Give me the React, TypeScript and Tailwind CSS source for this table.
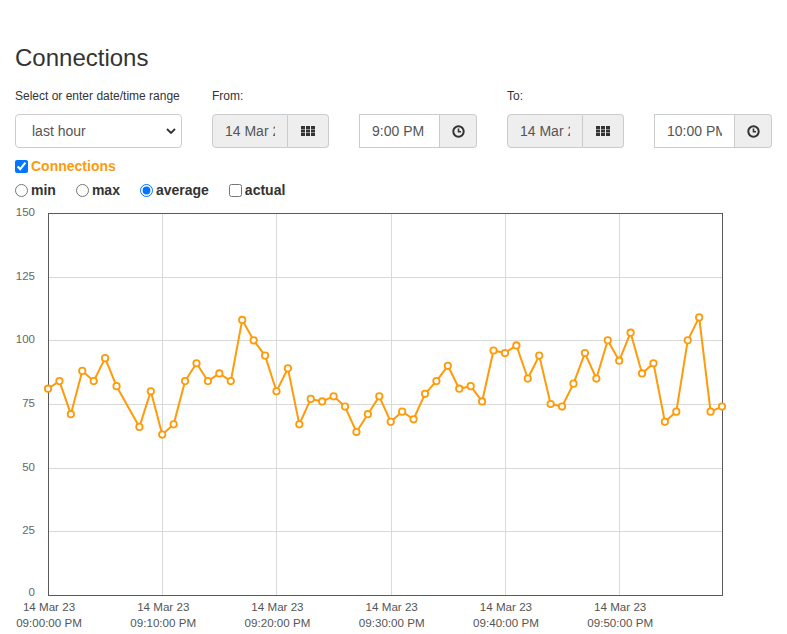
const values: (number | null)[] = [
  81, 84, 71, 88, 84, 93, 82, null, 66, 80, 63, 67, 84, 91, 84, 87, 84, 108, 100, 94,
  80, 89, 67, 77, 76, 78, 74, 64, 71, 78, 68, 72, 69, 79, 84, 90, 81, 82, 76, 96,
  95, 98, 85, 94, 75, 74, 83, 95, 85, 100, 92, 103, 87, 91, 68, 72, 100, 109, 72, 74,
];

const X0 = 48;
const X1 = 722;
const Y0 = 595;
const Y1 = 213;
const xOf = (m: number) => X0 + (m * (X1 - X0)) / 59;
const yOf = (v: number) => Y0 - (v * (Y0 - Y1)) / 150;

const GridIcon = () => (
  <svg width="14" height="10" viewBox="0 0 14 10" fill="#333">
    {[0, 5, 10].map((x) =>
      [0, 3.5, 7].map((y) => <rect key={`${x}-${y}`} x={x} y={y} width="4" height="3" />)
    )}
  </svg>
);

const ClockIcon = () => (
  <svg width="13" height="13" viewBox="0 0 13 13" fill="none" stroke="#333">
    <circle cx="6.5" cy="6.5" r="5.2" strokeWidth="2" />
    <path d="M6.5 3.4 V6.8 H9" strokeWidth="1.6" />
  </svg>
);

const DateGroup = ({ value }: { value: string }) => (
  <div className="flex h-[34px]">
    <input
      readOnly
      value={value}
      className="w-[76px] h-full rounded-l-[4px] border border-[#ccc] bg-[#eee] px-[12px] text-[14px] text-[#555] outline-none"
    />
    <div className="flex w-[41px] h-full items-center justify-center rounded-r-[4px] border border-l-0 border-[#ccc] bg-[#eee]">
      <GridIcon />
    </div>
  </div>
);

const TimeGroup = ({ value }: { value: string }) => (
  <div className="flex h-[34px]">
    <input
      readOnly
      value={value}
      className="w-[81px] h-full border border-[#ccc] bg-white px-[12px] text-[14px] text-[#555] outline-none"
    />
    <div className="flex w-[37px] h-full items-center justify-center rounded-r-[4px] border border-l-0 border-[#ccc] bg-[#eee]">
      <ClockIcon />
    </div>
  </div>
);

const Chart = () => {
  const pts = values
    .map((v, m) => (v === null ? null : [xOf(m), yOf(v)]))
    .filter((p): p is number[] => p !== null);
  const yTicks = [0, 25, 50, 75, 100, 125, 150];
  const xTicks = [0, 10, 20, 30, 40, 50];

  return (
    <svg className="block" width="787" height="434" viewBox="0 200 787 434">
      {yTicks.slice(1, -1).map((t) => (
        <line key={t} x1={X0} x2={X1} y1={Math.round(yOf(t)) + 0.5} y2={Math.round(yOf(t)) + 0.5} stroke="#d9d9d9" />
      ))}
      {xTicks.slice(1).map((t) => (
        <line key={t} x1={Math.round(xOf(t)) + 0.5} x2={Math.round(xOf(t)) + 0.5} y1={Y1} y2={Y0} stroke="#d9d9d9" />
      ))}
      <rect x={X0 + 0.5} y={Y1 + 0.5} width={X1 - X0} height={Y0 - Y1} fill="none" stroke="#5a5a5a" />

      {yTicks.map((t) => (
        <text key={t} x="35" y={yOf(t) - (t === 0 ? 2 : 0)} textAnchor="end" dominantBaseline="middle" fontSize="11.5" fill="#666">
          {t}
        </text>
      ))}
      {xTicks.map((t) => {
        const min = t.toString().padStart(2, "0");
        return (
          <g key={t} fontSize="11.6" fill="#555" textAnchor="middle">
            <text x={xOf(t) + 1} y="611">14 Mar 23</text>
            <text x={xOf(t) + 1} y="627">{`09:${min}:00 PM`}</text>
          </g>
        );
      })}

      <polyline points={pts.map((p) => p.join(",")).join(" ")} fill="none" stroke="#ff9a0a" strokeWidth="2" strokeLinejoin="round" />
      {pts.map(([x, y], i) => (
        <circle key={i} cx={x} cy={y} r="3.2" fill="white" stroke="#ff9a0a" strokeWidth="1.8" />
      ))}
    </svg>
  );
};

export default function App() {
  return (
    <div className="h-screen overflow-hidden bg-white font-['Liberation_Sans',Arial,sans-serif] text-[#333]">
      <div className="px-[15px] pt-[45px]">
        <h1 className="h-[26px] text-[24px] leading-[26px] font-normal">Connections</h1>

        <div className="mt-[17px] grid grid-cols-[167px_117px_118px_117px_118px] gap-x-[30px] gap-y-[9px]">
          <label className="h-[17px] text-[12px] leading-[17px]">Select or enter date/time range</label>
          <label className="h-[17px] text-[12px] leading-[17px]">From:</label>
          <div />
          <label className="h-[17px] text-[12px] leading-[17px]">To:</label>
          <div />

          <div className="flex h-[34px] items-center justify-between rounded-[4px] border border-[#ccc] bg-white pl-[16px] pr-[4px] text-[14px] text-[#555]">
            <span>last hour</span>
            <svg width="10" height="6" viewBox="0 0 10 6" fill="none" stroke="#333" strokeWidth="1.8" className="mr-[1px]">
              <path d="M1 1 L5 5 L9 1" />
            </svg>
          </div>
          <DateGroup value="14 Mar 2023" />
          <TimeGroup value="9:00 PM" />
          <DateGroup value="14 Mar 2023" />
          <TimeGroup value="10:00 PM" />
        </div>

        <div className="mt-[8px] flex h-[20px] items-center">
          <label className="flex items-center">
            <input type="checkbox" defaultChecked className="m-0 mr-[3px] h-[13px] w-[13px]" />
            <span className="text-[14px] font-bold text-[#ff9a0a]">Connections</span>
          </label>
        </div>

        <div className="mt-[4px] flex h-[20px] items-center gap-5 text-[14px] font-bold">
          <label className="flex items-center">
            <input type="radio" name="agg" className="m-0 mr-[3px] h-[13px] w-[13px]" />
            <span>min</span>
          </label>
          <label className="flex items-center">
            <input type="radio" name="agg" className="m-0 mr-[3px] h-[13px] w-[13px]" />
            <span>max</span>
          </label>
          <label className="flex items-center">
            <input type="radio" name="agg" defaultChecked className="m-0 mr-[3px] h-[13px] w-[13px]" />
            <span>average</span>
          </label>
          <label className="flex items-center">
            <input type="checkbox" className="m-0 mr-[3px] h-[13px] w-[13px]" />
            <span>actual</span>
          </label>
        </div>
      </div>

      <Chart />
    </div>
  );
}
